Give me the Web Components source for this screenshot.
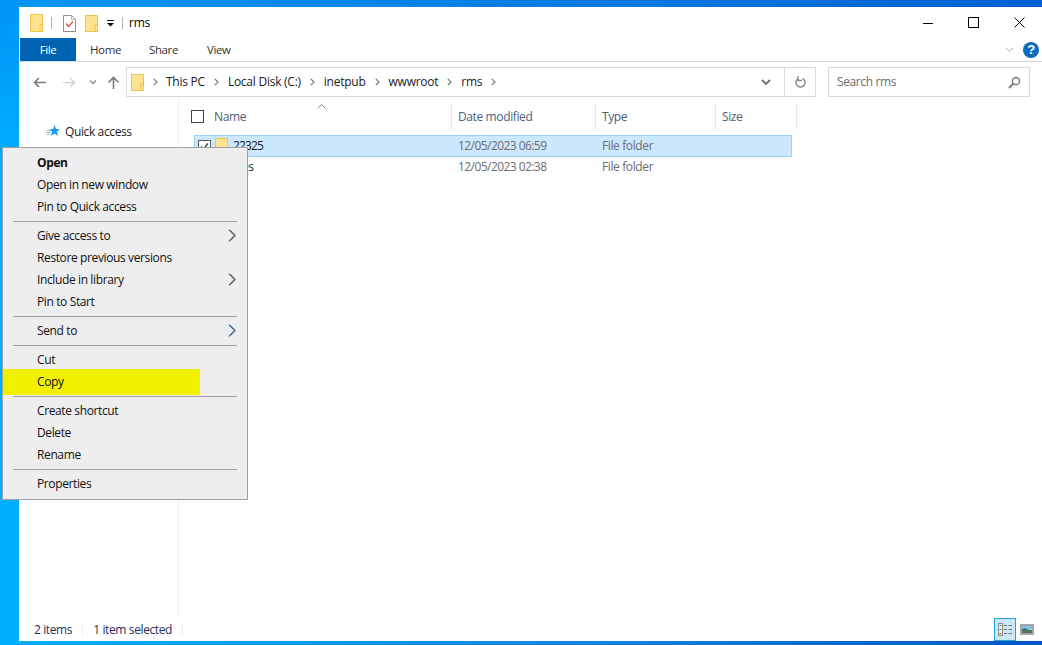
<!DOCTYPE html>
<html>
<head>
<meta charset="utf-8">
<title>rms</title>
<style>
    html, body { margin: 0; height: 100%; overflow: hidden; }
    body { font: 12px "Open Sans", "Liberation Sans", sans-serif; letter-spacing: -0.38px; color: #000; }
</style>
</head>
<body>
<explorer-window>
    <title-bar></title-bar>
    <ribbon-tabs></ribbon-tabs>
    <nav-bar></nav-bar>
    <main-area></main-area>
    <status-bar></status-bar>
    <context-menu></context-menu>
</explorer-window>

<script>
const FOLDER = `<svg width="13" height="17" viewBox="0 0 13 17"><rect x=".5" y=".5" width="12" height="16" fill="#ffe391" stroke="#ecc54d"/><path d="M10 16V9.500h2.500" fill="none" stroke="#ecc54d"/></svg>`;
const CHEV = `<svg class="chev" width="5" height="8" viewBox="0 0 5 8"><path d="M.8.800L4 4 .8 7.200" fill="none" stroke="#7a7a7a" stroke-width="1.200"/></svg>`;

function define(name, html) {
    customElements.define(name, class extends HTMLElement {
        constructor() {
            super();
            this.attachShadow({ mode: 'open' });
            const template = document.createElement('template');
            template.innerHTML = html;
            this.shadowRoot.appendChild(template.content.cloneNode(true));
        }
    });
}

define('explorer-window', `
    <style>
        :host {
            display: block;
            position: relative;
            box-sizing: border-box;
            height: 645px;
            padding: 7px 0 4px 19px;
            background:
                linear-gradient(180deg, rgba(0, 110, 225, .4), rgba(0, 110, 225, 0) 160px),
                linear-gradient(90deg, #00aeff 0, #00aeff 19px, #0b7fe0 650px, #0056c8 1042px);
        }
        .window {
            display: flex;
            flex-direction: column;
            height: 100%;
            background: #fff;
        }
    </style>
    <div class="window"><slot></slot></div>`);

define('title-bar', `
    <style>
        :host { display: flex; align-items: center; height: 31px; flex: none; font-size: 12px; }
        svg { display: block; flex: none; }
        .sep { width: 1px; height: 12px; background: #b0b0b0; flex: none; }
        .title { margin-left: 6px; letter-spacing: -0.2px; }
        .controls { margin-left: auto; display: flex; align-items: center; margin-right: 17px; }
    </style>
    <svg style="margin-left:11px;margin-top:1px" width="13" height="18" viewBox="0 0 13 18"><rect x=".5" y=".5" width="12" height="17" fill="#ffe391" stroke="#ecc54d"/><path d="M10 17V10.500h2.500" fill="none" stroke="#ecc54d"/></svg>
    <span class="sep" style="margin-left:8px"></span>
    <svg style="margin-left:11px;margin-top:2px" width="13" height="17" viewBox="0 0 13 17"><path d="M.5.500h8l4 4v12H.5z" fill="#fff" stroke="#8f8f8f"/><path d="M8.500.500v4h4" fill="none" stroke="#b5b5b5"/><path d="M3 8.500l2.500 3 4.500-5" fill="none" stroke="#e8562a" stroke-width="1.400"/></svg>
    <span style="margin-left:9px;margin-top:2px">${FOLDER}</span>
    <svg style="margin-left:9px;margin-top:2px" width="7" height="7" viewBox="0 0 7 7"><path d="M0 .500h7" stroke="#000"/><path d="M0 3h7L3.500 6.500z" fill="#000"/></svg>
    <span class="sep" style="margin-left:8px"></span>
    <span class="title">rms</span>
    <div class="controls">
        <svg width="10" height="10" viewBox="0 0 10 10" style="margin-right:35px"><path d="M0 5.500h10" stroke="#000"/></svg>
        <svg width="11" height="11" viewBox="0 0 11 11" style="margin-right:35px"><rect x=".5" y=".5" width="10" height="10" fill="none" stroke="#000"/></svg>
        <svg width="11" height="11" viewBox="0 0 11 11"><path d="M.5.500l10 10M10.500.500l-10 10" stroke="#000" fill="none"/></svg>
    </div>`);

define('ribbon-tabs', `
    <style>
        :host {
            display: flex;
            height: 23px;
            flex: none;
            align-items: center;
            border-bottom: 1px solid #dadbdc;
            font-size: 11.500px;
            color: #333;
        }
        .file {
            width: 56px;
            height: 23px;
            margin-left: 1px;
            margin-right: 14px;
            background: #0063b1;
            color: #fff;
            display: flex;
            align-items: center;
            justify-content: center;
        }
        .tab { width: 59px; }
        .right { margin-left: auto; display: flex; align-items: center; margin-right: 3px; gap: 9px; }
        .help {
            width: 16px;
            height: 16px;
            border-radius: 50%;
            background: #0f6cbd;
            color: #fff;
            font: bold 13px/16px "Liberation Sans", sans-serif;
            text-align: center;
        }
    </style>
    <span class="file">File</span>
    <span class="tab">Home</span>
    <span class="tab" style="width:58px">Share</span>
    <span class="tab">View</span>
    <div class="right">
        <svg width="9" height="6" viewBox="0 0 9 6"><path d="M.5.500l4 4 4-4" fill="none" stroke="#b0b0b0"/></svg>
        <span class="help">?</span>
    </div>`);

define('nav-bar', `
    <style>
        :host {
            display: flex;
            align-items: center;
            height: 36px;
            flex: none;
            box-sizing: border-box;
            padding: 5px 12px 1px 14px;
        }
        svg { display: block; flex: none; }
        .address {
            flex: none;
            width: 690px;
            height: 30px;
            margin-left: 6px;
            box-sizing: border-box;
            border: 1px solid #d9d9d9;
            display: flex;
            align-items: center;
            color: #1a1a1a;
            letter-spacing: -0.25px;
        }
        .crumb { margin-left: 9px; padding-bottom: 1px; }
        .chev { margin-left: 9px; }
        .drop { margin-left: auto; margin-right: 13px; }
        .refresh {
            width: 30px;
            height: 28px;
            border-left: 1px solid #d9d9d9;
            display: flex;
            align-items: center;
            justify-content: center;
        }
        .search {
            flex: none;
            width: 202px;
            height: 30px;
            margin-left: 12px;
            box-sizing: border-box;
            border: 1px solid #d9d9d9;
            display: flex;
            align-items: center;
            justify-content: space-between;
            padding: 0 8px;
            color: #6d6d6d;
        }
        .search span { padding-bottom: 1px; }
    </style>
    <svg width="13" height="11" viewBox="0 0 13 11"><path d="M13 5.500H2M6 1L1.500 5.500 6 10" fill="none" stroke="#7a7a7a" stroke-width="1.600"/></svg>
    <svg style="margin-left:17px" width="13" height="11" viewBox="0 0 13 11"><path d="M0 5.500h11M7 1l4.500 4.500L7 10" fill="none" stroke="#d5d5d5" stroke-width="1.600"/></svg>
    <svg style="margin-left:13px" width="8" height="5" viewBox="0 0 8 5"><path d="M1 .500l3 3 3-3" fill="none" stroke="#8a8a8a" stroke-width="1.300"/></svg>
    <svg style="margin-left:10px" width="13" height="13" viewBox="0 0 13 13"><path d="M6.500 13V2M1.500 6.500l5-5 5 5" fill="none" stroke="#7a7a7a" stroke-width="1.600"/></svg>
    <div class="address">
        <span style="margin-left:4px;margin-top:1px">${FOLDER}</span>
        ${CHEV}
        <span class="crumb" style="margin-left:8px">This PC</span>
        ${CHEV}
        <span class="crumb">Local Disk (C:)</span>
        ${CHEV}
        <span class="crumb">inetpub</span>
        ${CHEV}
        <span class="crumb">wwwroot</span>
        ${CHEV}
        <span class="crumb">rms</span>
        ${CHEV}
        <svg class="drop" width="10" height="6" viewBox="0 0 10 6"><path d="M1 1l4 4 4-4" fill="none" stroke="#6d6d6d" stroke-width="1.800"/></svg>
        <div class="refresh">
            <svg width="11" height="12" viewBox="0 0 11 12"><path d="M3.300 2.600A4.500 4.500 0 1 0 7.500 2.500" fill="none" stroke="#8a8a8a" stroke-width="1.500"/><path d="M3 0v4.500h4" fill="none" stroke="#8a8a8a" stroke-width="1.300"/></svg>
        </div>
    </div>
    <div class="search">
        <span>Search rms</span>
        <svg width="13" height="13" viewBox="0 0 13 13"><circle cx="8" cy="5" r="3.600" fill="none" stroke="#7a7a7a" stroke-width="1.500"/><path d="M5.500 7.500L1 12" stroke="#7a7a7a" stroke-width="2"/></svg>
    </div>`);

define('main-area', `
    <style>
        :host { display: flex; flex: 1; min-height: 0; }
        nav-pane { flex: none; }
        file-list { flex: 1; }
    </style>
    <nav-pane></nav-pane>
    <file-list></file-list>`);

define('nav-pane', `
    <style>
        :host {
            display: block;
            width: 160px;
            height: 100%;
            box-sizing: border-box;
            padding-top: 27px;
            border-right: 1px solid #f0f0f0;
        }
        .item { display: flex; align-items: center; height: 12px; padding-left: 27px; color: #1a1a1a; gap: 5px; }
    </style>
    <div class="item">
        <svg width="14" height="13" viewBox="0 0 14 13"><path d="M8.500 0l1.500 4 4 .2-3.100 2.600 1.100 4.200-3.500-2.400L5 11l1.100-4.200-2.600-2.600 3.500-.2z" fill="#1f9bf5"/><path d="M1 5.500h3.500M0 7.500h4.500M1 9.500h3" stroke="#7cc4f7"/></svg>
        <span>Quick access</span>
    </div>`);

define('file-list', `
    <style>
        :host { display: block; padding-top: 6px; color: #1a1a1a; }
        .head {
            display: grid;
            grid-template-columns: 272px 144px 120px 80px;
            width: 617px;
            height: 25px;
            color: #4c607a;
            border-right: 1px solid #e5e5e5;
        }
        .head > div {
            display: flex;
            align-items: center;
            padding-left: 6px;
            border-left: 1px solid #e5e5e5;
            position: relative;
        }
        .head > div:first-child { border-left: 0; padding-left: 12px; }
        .box { width: 11px; height: 11px; border: 1px solid #444; flex: none; margin-right: 10px; }
        .sort { position: absolute; left: 138px; top: 0; }
        .rows { margin: 6px 0 0 15px; width: 598px; }
        .row {
            display: grid;
            grid-template-columns: 257px 144px 120px 77px;
            height: 21px;
            box-sizing: border-box;
            align-items: center;
        }
        .row.selected { height: 22px; background: #cce8ff; border: 1px solid #99d1ff; }
        .name { display: flex; align-items: center; }
        .row.selected .name { margin-left: 3px; }
        .row > span { color: #6d6d6d; padding-left: 7px; padding-bottom: 2px; }
        .row.selected > span { padding-left: 6px; }
        .row > .date { letter-spacing: -0.56px; }
        .label { margin-left: 5px; padding-bottom: 2px; }
        .digits { letter-spacing: -0.85px; }
        .check { display: block; flex: none; margin-right: 4px; }
    </style>
    <div class="head">
        <div><span class="box"></span>Name
            <svg class="sort" width="9" height="5" viewBox="0 0 9 5"><path d="M.5 4.500l4-4 4 4" fill="none" stroke="#8a8a8a"/></svg>
        </div>
        <div>Date modified</div>
        <div>Type</div>
        <div>Size</div>
    </div>
    <div class="rows">
        <div class="row selected">
            <div class="name">
                <svg class="check" width="13" height="13" viewBox="0 0 13 13"><rect x=".5" y=".5" width="12" height="12" fill="#fff" stroke="#555"/><path d="M3 6.500l2.500 2.500L10 3.500" fill="none" stroke="#333" stroke-width="1.200"/></svg>
                ${FOLDER}<span class="label digits">22325</span>
            </div>
            <span class="date">12/05/2023 06:59</span>
            <span>File folder</span>
            <span></span>
        </div>
        <div class="row">
            <div class="name" style="padding-left:34px"><span class="label">files</span></div>
            <span class="date">12/05/2023 02:38</span>
            <span>File folder</span>
            <span></span>
        </div>
    </div>`);

define('status-bar', `
    <style>
        :host {
            display: flex;
            align-items: center;
            height: 24px;
            flex: none;
            color: #2d2d5a;
            padding-left: 15px;
        }
        .sep { width: 1px; height: 12px; background: #ececec; margin: 0 10px; }
        .views { margin-left: auto; margin-right: 8px; display: flex; align-items: center; gap: 4px; }
        .details {
            width: 20px;
            height: 21px;
            border: 1px solid #26a0da;
            background: #cbe8f6;
            display: flex;
            align-items: center;
            justify-content: center;
        }
        svg { display: block; }
    </style>
    <span>2 items</span>
    <span class="sep"></span>
    <span>1 item selected</span>
    <span class="sep"></span>
    <div class="views">
        <div class="details">
            <svg width="15" height="13" viewBox="0 0 15 13"><rect x=".5" y=".5" width="4" height="12" fill="#f2f2f2" stroke="#8a8a8a"/><path d="M1.500 2.500h2M1.500 6.500h2" stroke="#5a7fa8"/><path d="M1.500 10.500h2" stroke="#c0392b"/><path d="M6 2.500h3M10.500 2.500H14M6 6.500h3M10.500 6.500H14M6 10.500h3M10.500 10.500H14" stroke="#707070"/></svg>
        </div>
        <svg width="14" height="11" viewBox="0 0 14 11"><rect x="1" y="1" width="12" height="9" fill="#fff" stroke="#a5a5a5" stroke-width="2"/><rect x="2" y="2" width="10" height="3.500" fill="#7cc0f0"/><path d="M2 5l3-1 3 1.500 4 .5V9H2z" fill="#4d7565"/></svg>
    </div>`);

define('context-menu', `
    <style>
        :host {
            display: block;
            position: absolute;
            left: 2px;
            top: 147px;
            width: 246px;
            height: 353px;
            box-sizing: border-box;
            padding: 3px 0 0 0;
            background: #eee;
            border: 1px solid #a0a0a0;
            font-size: 12px;
            color: #111;
        }
        .group { border-bottom: 1px solid #a0a0a0; margin: 0 10px 2px 10px; padding-bottom: 4px; }
        .group:last-child { border-bottom: 0; }
        menu-item { margin: 0 -10px; }
    </style>
    <div class="group">
        <menu-item bold>Open</menu-item>
        <menu-item>Open in new window</menu-item>
        <menu-item>Pin to Quick access</menu-item>
    </div>
    <div class="group">
        <menu-item sub="#b5502a">Give access to</menu-item>
        <menu-item>Restore previous versions</menu-item>
        <menu-item sub="#b5502a">Include in library</menu-item>
        <menu-item>Pin to Start</menu-item>
    </div>
    <div class="group">
        <menu-item sub="#2b7fd6">Send to</menu-item>
    </div>
    <div class="group">
        <menu-item>Cut</menu-item>
        <menu-item mark>Copy</menu-item>
    </div>
    <div class="group">
        <menu-item>Create shortcut</menu-item>
        <menu-item>Delete</menu-item>
        <menu-item>Rename</menu-item>
    </div>
    <div class="group">
        <menu-item>Properties</menu-item>
    </div>`);

class MenuItem extends HTMLElement {
    constructor() {
        super();
        this.attachShadow({ mode: 'open' });
    }

    connectedCallback() {
        const sub = this.getAttribute('sub');
        const chevron = 'M1.300.800L7 6.500 1.300 12.200';
        const arrow = sub ? `<svg class="arrow" width="8" height="13" viewBox="0 0 8 13">
            <path d="${chevron}" transform="translate(-.7 0)" fill="none" stroke="${sub}" stroke-width=".9"/>
            <path d="${chevron}" transform="translate(.7 0)" fill="none" stroke="#3f8fe0" stroke-width=".9"/>
            <path d="${chevron}" fill="none" stroke="#333" stroke-width=".8"/>
        </svg>` : '';
        this.shadowRoot.innerHTML = `
            <style>
                :host {
                    display: flex;
                    align-items: center;
                    position: relative;
                    height: 22px;
                    padding-left: 34px;
                }
                :host([bold]) { font-weight: 700; }
                .mark { position: absolute; left: 0; top: -1px; width: 197px; height: 26px; background: #f0f000; }
                .text { position: relative; }
                .arrow { position: absolute; right: 11px; top: 5px; }
            </style>
            ${this.hasAttribute('mark') ? '<span class="mark"></span>' : ''}
            <span class="text"><slot></slot></span>
            ${arrow}`;
    }
}
customElements.define('menu-item', MenuItem);
</script>
</body>
</html>
